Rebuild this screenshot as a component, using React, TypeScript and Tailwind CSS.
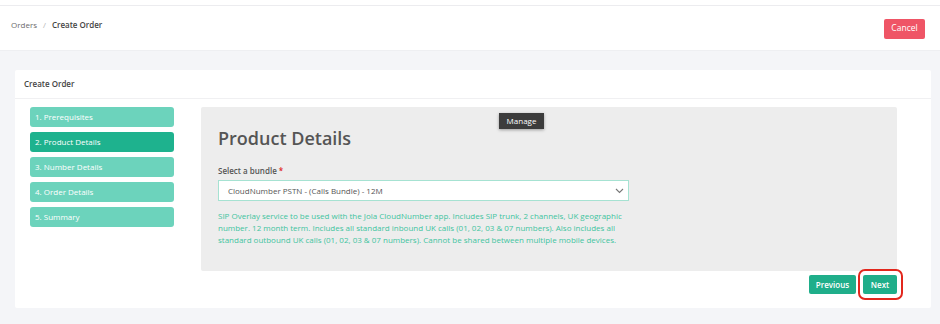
import React from "react";

const steps = [
  { label: "1. Prerequisites", active: false },
  { label: "2. Product Details", active: true },
  { label: "3. Number Details", active: false },
  { label: "4. Order Details", active: false },
  { label: "5. Summary", active: false },
];

export default function App() {
  return (
    <div
      className="w-[940px] h-[324px] bg-[#f4f5f8] overflow-hidden"
      style={{ fontFamily: '"Open Sans", "Noto Sans", sans-serif' }}
    >
      <div className="h-[6px] bg-white border-b border-[#ececef]" />
      <div className="h-[45px] bg-white flex items-center justify-between pl-[11px] pr-[15px] border-b border-[#eeeff2]">
        <div className="flex items-center text-[8px] -mt-[6px]">
          <span className="text-[#6b6b6b]">Orders</span>
          <span className="text-[#b5b5b5] mx-[6px]">/</span>
          <span className="text-[#444] font-semibold">Create Order</span>
        </div>
        <button className="h-[20px] w-[41px] mt-[1px] rounded-[2px] bg-[#ef5566] text-white text-[8.5px] flex items-center justify-center">
          Cancel
        </button>
      </div>

      <div className="pt-[19px] pl-[15px] pr-[9px]">
        <div className="bg-white rounded-[2px]">
          <div className="h-[29px] flex items-center pl-[9px] border-b border-[#f0f0f2]">
            <span className="text-[8px] font-semibold text-[#444]">Create Order</span>
          </div>
          <div className="flex pt-[8px] pb-[14px] pl-[15px] pr-[34px]">
            <div className="w-[144px] flex flex-col gap-[5px]">
              {steps.map((s) => (
                <div
                  key={s.label}
                  className={`h-[20px] rounded-[3px] flex items-center pl-[5px] text-[8px] text-white ${
                    s.active ? "bg-[#1eb28e]" : "bg-[#6cd3bc]"
                  }`}
                >
                  {s.label}
                </div>
              ))}
            </div>
            <div className="ml-[27px] flex-1 flex flex-col">
              <div className="relative h-[164px] bg-[#ededed] rounded-[2px] pl-[17px] pt-[20px]">
                <div className="absolute left-[298px] top-[6px] h-[16px] w-[45px] bg-[#3c3c3c] text-white text-[8px] flex items-center justify-center shadow-[0_1px_3px_rgba(0,0,0,0.35)]">
                  Manage
                </div>
                <div className="text-[18px] font-semibold text-[#555] leading-[22px]">Product Details</div>
                <div className="mt-[16px] text-[8px] font-semibold text-[#555] leading-[12px]">
                  Select a bundle <span className="text-[#e02424]">*</span>
                </div>
                <div className="mt-[3px] w-[411px] h-[21px] bg-white border border-[#a6e2d2] flex items-center justify-between pl-[9px] pr-[4px]">
                  <span className="text-[8px] text-[#555]">CloudNumber PSTN - (Calls Bundle) - 12M</span>
                  <svg width="9" height="6" viewBox="0 0 9 6" fill="none">
                    <path d="M1 1l3.5 3.5L8 1" stroke="#777" strokeWidth="1.1" />
                  </svg>
                </div>
                <div className="mt-[9px] text-[8px] leading-[12px] text-[#3fc4a0]">
                  SIP Overlay service to be used with the Jola CloudNumber app. Includes SIP trunk, 2 channels, UK geographic
                  <br />
                  number. 12 month term. Includes all standard inbound UK calls (01, 02, 03 &amp; 07 numbers). Also includes all
                  <br />
                  standard outbound UK calls (01, 02, 03 &amp; 07 numbers). Cannot be shared between multiple mobile devices.
                </div>
              </div>
              <div className="flex justify-end gap-[7px] mt-[4px]">
                <button className="h-[19px] w-[47px] rounded-[2px] bg-[#1fae8a] text-white text-[8px] font-semibold flex items-center justify-center">
                  Previous
                </button>
                <div className="relative">
                  <button className="h-[19px] w-[34px] rounded-[2px] bg-[#1fae8a] text-white text-[8px] font-semibold flex items-center justify-center">
                    Next
                  </button>
                  <div className="absolute left-[-5px] right-[-6px] top-[-6px] bottom-[-6px] border-2 border-[#e2271d] rounded-[7px] pointer-events-none" />
                </div>
              </div>
            </div>
          </div>
        </div>
      </div>
    </div>
  );
}
